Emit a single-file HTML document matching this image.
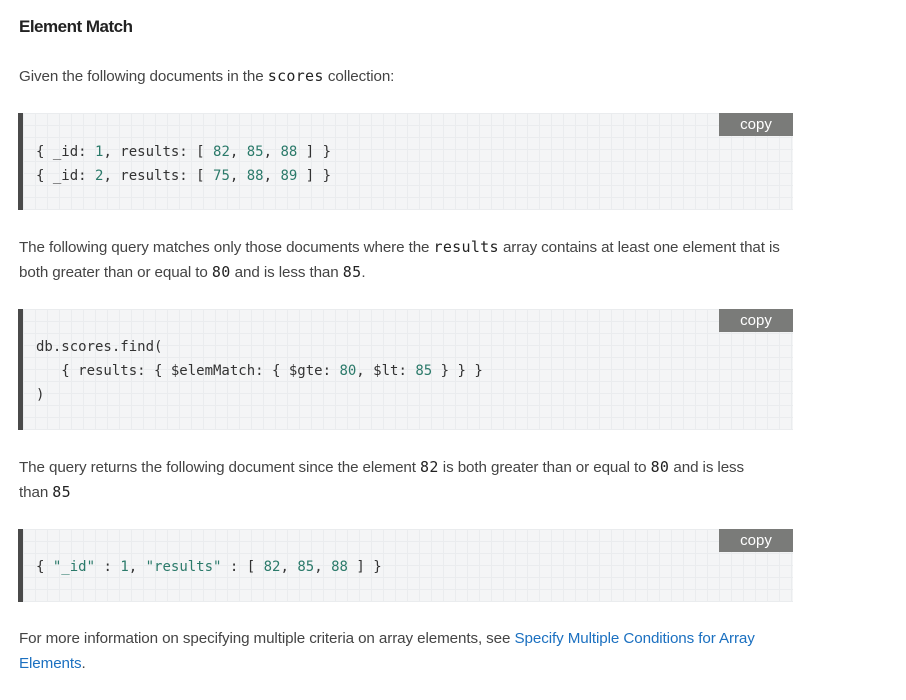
<!DOCTYPE html>
<html><head><style>
body{margin:0;background:#fff;font-family:"Liberation Sans",sans-serif;color:#333;width:906px;height:700px;overflow:hidden}
h3{position:absolute;left:19px;top:17px;margin:0;font-size:17px;font-weight:bold;color:#222;letter-spacing:-0.5px}
p{position:absolute;left:19px;margin:0;font-size:15.2px;line-height:25px;width:785px;color:#444;letter-spacing:-0.1px}
code{font-family:"DejaVu Sans Mono",monospace;font-size:15px;color:#222;letter-spacing:0.3px}
.blk{position:absolute;left:18px;width:775px;border-left:5px solid #4a4a4a;box-sizing:border-box;background-color:#f4f5f6;
background-image:linear-gradient(#eaecee 1px,transparent 1px),linear-gradient(90deg,#eaecee 1px,transparent 1px);background-size:12px 12px}
.copy{position:absolute;right:0;top:0;width:74px;height:23px;background:#7a7b79;color:#fff;font-size:15px;text-align:center;line-height:23px}
pre{position:absolute;left:13px;margin:0;font-family:"DejaVu Sans Mono",monospace;font-size:14px;line-height:24px;color:#333}
.n{color:#2b7a6a}.s{color:#2b7a6a}
a{color:#1b70c0;text-decoration:none}
</style></head><body>
<h3>Element Match</h3>
<p style="top:64px">Given the following documents in the <code>scores</code> collection:</p>
<div class="blk" style="top:113px;height:97px"><div class="copy">copy</div>
<pre style="top:27px">{ _id: <span class="n">1</span>, results: [ <span class="n">82</span>, <span class="n">85</span>, <span class="n">88</span> ] }
{ _id: <span class="n">2</span>, results: [ <span class="n">75</span>, <span class="n">88</span>, <span class="n">89</span> ] }</pre></div>
<p style="top:235px">The following query matches only those documents where the <code>results</code> array contains at least one element that is both greater than or equal to <code>80</code> and is less than <code>85</code>.</p>
<div class="blk" style="top:309px;height:121px"><div class="copy">copy</div>
<pre style="top:26px">db.scores.find(
   { results: { $elemMatch: { $gte: <span class="n">80</span>, $lt: <span class="n">85</span> } } }
)</pre></div>
<p style="top:455px;width:755px">The query returns the following document since the element <code>82</code> is both greater than or equal to <code>80</code> and is less than <code>85</code></p>
<div class="blk" style="top:529px;height:73px"><div class="copy">copy</div>
<pre style="top:26px">{ <span class="s">"_id"</span> : <span class="n">1</span>, <span class="s">"results"</span> : [ <span class="n">82</span>, <span class="n">85</span>, <span class="n">88</span> ] }</pre></div>
<p style="top:626px">For more information on specifying multiple criteria on array elements, see <a>Specify Multiple Conditions for Array Elements</a>.</p>
</body></html>
